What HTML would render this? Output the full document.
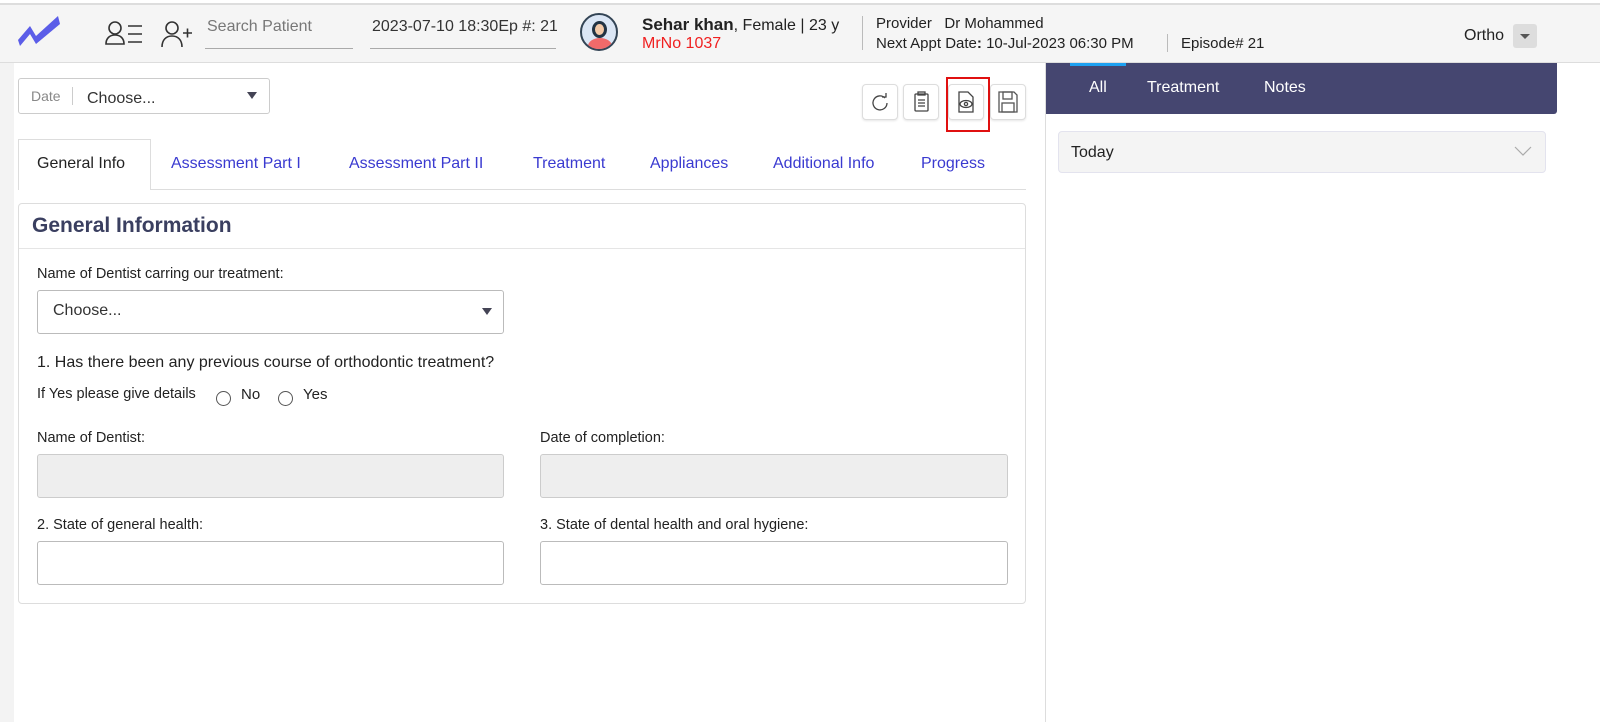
<!DOCTYPE html>
<html><head><style>
*{box-sizing:border-box;margin:0;padding:0}
body{width:1600px;height:722px;overflow:hidden;background:#fff;font-family:"Liberation Sans",Arial,sans-serif;position:relative;color:#222}
.a{position:absolute}
.hdr{left:0;top:3px;width:1600px;height:60px;background:#f5f5f5;border-top:2px solid #ddd;border-bottom:1px solid #ddd}
.t{font-size:16px;white-space:nowrap}
.btn{width:36px;height:36px;border:1px solid #ddd;border-radius:4px;background:#fff;box-shadow:0 1px 2px rgba(0,0,0,.1)}
.tab{font-size:16px;color:#3a3ad0;top:155px}
.inp{border:1px solid #bbb;border-radius:3px;background:#fff}
.dis{background:#eee;border-color:#ccc}
.lab{font-size:14.5px;color:#222}
.radio{width:15px;height:15px;border:1px solid #555;border-radius:50%}
</style></head><body>
<div class="a hdr"></div>
<svg class="a" style="left:16px;top:14px" width="46" height="32" viewBox="0 0 46 32"><path d="M2 26 L14 12 L20 22 L42 2 L44 10 L20 30 L14 20 L4 32Z" fill="#5b5de8"/></svg>
<svg class="a" style="left:104px;top:20px" width="40" height="26" fill="none" stroke="#333" stroke-width="1.6"><circle cx="11" cy="8" r="6"/><path d="M2 24c0-6 4-9 9-9s9 3 9 9z"/><path d="M24 6h14M24 14h14M24 22h14"/></svg>
<svg class="a" style="left:160px;top:20px" width="36" height="28" fill="none" stroke="#333" stroke-width="1.6"><circle cx="12" cy="8" r="6"/><path d="M2 27c0-7 4-11 10-11s10 4 10 11"/><path d="M23 13h9M27.5 8.5v9"/></svg>
<div class="a t" style="left:207px;top:18px;color:#777">Search Patient</div>
<div class="a" style="left:205px;top:48px;width:148px;border-top:1px solid #aaa"></div>
<div class="a t" style="left:372px;top:18px;color:#333;width:185px;overflow:hidden">2023-07-10 18:30Ep #: 21</div>
<div class="a" style="left:370px;top:48px;width:186px;border-top:1px solid #aaa"></div>
<div class="a" style="left:580px;top:13px;width:38px;height:38px;border-radius:50%;border:2px solid #345;background:#dbe6f5;overflow:hidden"><div class="a" style="left:10px;top:6px;width:15px;height:17px;border-radius:50%;background:#f3c9a8;border:3px solid #234"></div><div class="a" style="left:6px;top:23px;width:24px;height:16px;border-radius:50% 50% 0 0;background:#f06a6a"></div></div>
<div class="a t" style="left:642px;top:15px;font-size:16px"><b style="font-size:17px">Sehar khan</b>, Female | 23 y</div>
<div class="a t" style="left:642px;top:35px;color:#f02020">MrNo 1037</div>
<div class="a" style="left:862px;top:16px;height:34px;border-left:1px solid #bbb"></div>
<div class="a t" style="left:876px;top:15px;font-size:15px">Provider &nbsp;&nbsp;Dr Mohammed</div>
<div class="a t" style="left:876px;top:35px;font-size:15px">Next Appt Date<b>:</b> 10-Jul-2023 06:30 PM</div>
<div class="a" style="left:1167px;top:34px;height:18px;border-left:1px solid #bbb"></div>
<div class="a t" style="left:1181px;top:35px;font-size:15px">Episode# 21</div>
<div class="a t" style="left:1464px;top:27px">Ortho</div>
<div class="a" style="left:1513px;top:24px;width:24px;height:24px;background:#ddd;border-radius:3px"><div class="a" style="left:7px;top:10px;border:5px solid transparent;border-top:5px solid #555"></div></div>
<div class="a" style="left:0;top:63px;width:14px;height:659px;background:#f3f3f3"></div>
<div class="a inp" style="left:18px;top:78px;width:252px;height:36px;border-color:#ccc"></div>
<div class="a t" style="left:31px;top:88px;color:#888;font-size:14px">Date</div>
<div class="a" style="left:72px;top:87px;height:18px;border-left:1px solid #ccc"></div>
<div class="a t" style="left:87px;top:90px;color:#333">Choose...</div>
<div class="a" style="left:247px;top:92px;border:5px solid transparent;border-top:7px solid #445"></div>
<div class="a btn" style="left:862px;top:84px"></div>
<svg class="a" style="left:870px;top:92px" width="20" height="20" fill="none" stroke="#444" stroke-width="1.3"><path d="M15 6A7 7 0 1 0 17 11"/><path d="M12 5h4V1"/></svg>
<div class="a btn" style="left:903px;top:84px"></div>
<svg class="a" style="left:912px;top:91px" width="20" height="22" fill="none" stroke="#444" stroke-width="1.3"><rect x="3" y="3" width="13" height="17" rx="1"/><rect x="6" y="1" width="7" height="3"/><path d="M6 9h7M6 12h7M6 15h7"/></svg>
<div class="a btn" style="left:948px;top:84px"></div>
<svg class="a" style="left:956px;top:91px" width="20" height="22" fill="none" stroke="#444" stroke-width="1.3"><path d="M3 1h9l5 5v15H3z"/><ellipse cx="10" cy="13" rx="6" ry="3.5"/><circle cx="10" cy="13" r="1.6"/></svg>
<div class="a" style="left:946px;top:77px;width:44px;height:55px;border:2px solid #e01010"></div>
<div class="a btn" style="left:990px;top:84px"></div>
<svg class="a" style="left:997px;top:90px" width="22" height="24" fill="none" stroke="#555" stroke-width="1.3"><path d="M2 2h15l3 3v17H2z"/><rect x="6" y="2" width="9" height="7"/><rect x="5" y="13" width="12" height="9"/></svg>
<div class="a" style="left:18px;top:189px;width:1008px;border-top:1px solid #ddd"></div>
<div class="a" style="left:18px;top:139px;width:133px;height:51px;border:1px solid #ddd;border-bottom:none;background:#fff"></div>
<div class="a t" style="left:37px;top:155px;color:#222">General Info</div>
<div class="a tab" style="left:171px">Assessment Part I</div>
<div class="a tab" style="left:349px">Assessment Part II</div>
<div class="a tab" style="left:533px">Treatment</div>
<div class="a tab" style="left:650px">Appliances</div>
<div class="a tab" style="left:773px">Additional Info</div>
<div class="a tab" style="left:921px">Progress</div>
<div class="a" style="left:18px;top:203px;width:1008px;height:401px;border:1px solid #ddd;border-radius:4px"></div>
<div class="a" style="left:19px;top:248px;width:1006px;border-top:1px solid #e5e5e5"></div>
<div class="a t" style="left:32px;top:214px;font-size:21px;font-weight:bold;color:#3a3f60">General Information</div>
<div class="a lab" style="left:37px;top:266px">Name of Dentist carring our treatment:</div>
<div class="a inp" style="left:37px;top:290px;width:467px;height:44px"></div>
<div class="a t" style="left:53px;top:302px;color:#333">Choose...</div>
<div class="a" style="left:482px;top:308px;border:5px solid transparent;border-top:7px solid #445"></div>
<div class="a t" style="left:37px;top:354px">1. Has there been any previous course of orthodontic treatment?</div>
<div class="a lab" style="left:37px;top:386px">If Yes please give details</div>
<div class="a radio" style="left:216px;top:391px"></div>
<div class="a lab" style="left:241px;top:386px;font-size:15px">No</div>
<div class="a radio" style="left:278px;top:391px"></div>
<div class="a lab" style="left:303px;top:386px;font-size:15px">Yes</div>
<div class="a lab" style="left:37px;top:430px">Name of Dentist:</div>
<div class="a lab" style="left:540px;top:430px">Date of completion:</div>
<div class="a inp dis" style="left:37px;top:454px;width:467px;height:44px"></div>
<div class="a inp dis" style="left:540px;top:454px;width:468px;height:44px"></div>
<div class="a lab" style="left:37px;top:517px">2. State of general health:</div>
<div class="a lab" style="left:540px;top:517px">3. State of dental health and oral hygiene:</div>
<div class="a inp" style="left:37px;top:541px;width:467px;height:44px"></div>
<div class="a inp" style="left:540px;top:541px;width:468px;height:44px"></div>
<div class="a" style="left:1045px;top:63px;height:659px;border-left:1px solid #ddd"></div>
<div class="a" style="left:1046px;top:63px;width:511px;height:51px;background:#454670;border-radius:0 0 3px 0"></div>
<div class="a" style="left:1070px;top:63px;width:56px;height:3px;background:#1da1f2"></div>
<div class="a t" style="left:1089px;top:79px;color:#fff">All</div>
<div class="a t" style="left:1147px;top:79px;color:#fff">Treatment</div>
<div class="a t" style="left:1264px;top:79px;color:#fff">Notes</div>
<div class="a" style="left:1058px;top:131px;width:488px;height:42px;background:#f4f4f4;border:1px solid #e3e3ee;border-radius:4px"></div>
<div class="a t" style="left:1071px;top:144px;color:#222">Today</div>
<svg class="a" style="left:1514px;top:145px" width="18" height="12" fill="none" stroke="#aaa" stroke-width="1.2"><path d="M1 2l8 8 8-8"/></svg>
</body></html>
